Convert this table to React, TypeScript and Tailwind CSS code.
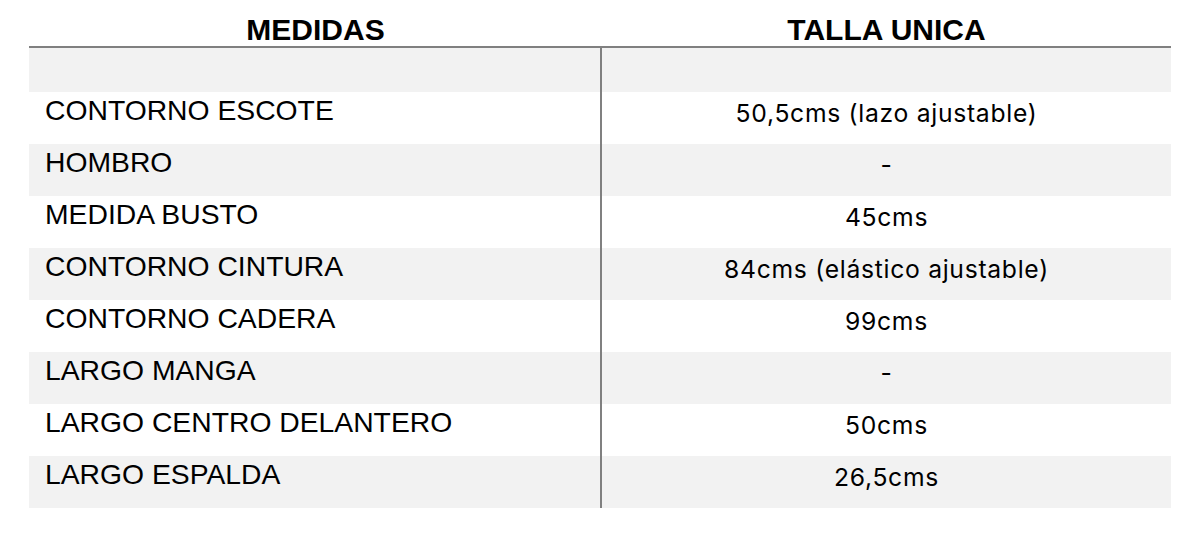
const rows: [string, string][] = [
  ["CONTORNO ESCOTE", "50,5cms (lazo ajustable)"],
  ["HOMBRO", "-"],
  ["MEDIDA BUSTO", "45cms"],
  ["CONTORNO CINTURA", "84cms (elástico ajustable)"],
  ["CONTORNO CADERA", "99cms"],
  ["LARGO MANGA", "-"],
  ["LARGO CENTRO DELANTERO", "50cms"],
  ["LARGO ESPALDA", "26,5cms"],
];

export default function App() {
  return (
    <div className="h-[537px] w-[1200px] bg-white pl-[29px] pr-[29px] text-black">
      {/* Header */}
      <div className="flex h-[48px] border-b-2 border-[#808080] pt-[15px] font-['Liberation_Sans',Arial,sans-serif] text-[30px] font-bold leading-none">
        <div className="w-[573px] text-center">MEDIDAS</div>
        <div className="flex-1 text-center">TALLA UNICA</div>
      </div>

      {/* Body */}
      <div className="flex flex-col">
        <div className="flex h-[44px] bg-[#f2f2f2]">
          <div className="w-[573px] border-r-2 border-[#808080]" />
          <div className="flex-1" />
        </div>
        {rows.map(([label, value], i) => (
          <div
            key={label}
            className={`flex h-[52px] ${i % 2 === 1 ? "bg-[#f2f2f2]" : "bg-white"}`}
          >
            <div className="w-[573px] border-r-2 border-[#808080] pl-[16px] pt-[2px] font-['Liberation_Sans',Arial,sans-serif] text-[28.3px] leading-[32px]">
              {label}
            </div>
            <div className="flex-1 pt-[5px] text-center font-['Inter',sans-serif] text-[24.7px] leading-[32px] tracking-[0.7px]">
              {value}
            </div>
          </div>
        ))}
      </div>
    </div>
  );
}
